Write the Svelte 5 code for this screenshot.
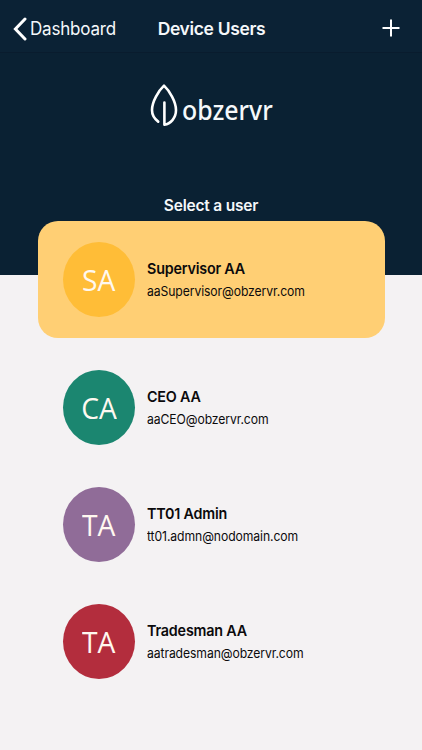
<script>
  const users = [
    { initials: 'SA', name: 'Supervisor AA', email: 'aaSupervisor@obzervr.com', tone: 'amber', selected: true },
    { initials: 'CA', name: 'CEO AA', email: 'aaCEO@obzervr.com', tone: 'green' },
    { initials: 'TA', name: 'TT01 Admin', email: 'tt01.admn@nodomain.com', tone: 'purple' },
    { initials: 'TA', name: 'Tradesman AA', email: 'aatradesman@obzervr.com', tone: 'red' }
  ];
</script>

<main class="screen">
  <header class="bar">
    <button class="back">
      <svg width="14" height="24" viewBox="0 0 14 24"><path d="M12 2 L2.4 12 L12 22" /></svg>
      <span>Dashboard</span>
    </button>
    <h1>Device Users</h1>
    <button class="add" aria-label="Add user">
      <svg width="18" height="18" viewBox="0 0 18 18"><path d="M9 .5V17.5M.5 9H17.5" /></svg>
    </button>
  </header>

  <section class="hero">
    <div class="logo">
      <svg width="28" height="44" viewBox="0 0 28 44">
        <path d="M8.2 38.6C4.2 35.6 2 31.6 2 27C2 18.6 8.6 7.6 14 2.6C19.4 7.6 26 18.6 26 27C26 35 20.5 41 14.4 41.6V19.5" />
      </svg>
      <span>obzervr</span>
    </div>
    <h2>Select a user</h2>
  </section>

  <ul class="users">
    {#each users as user}
      <li class="user" class:selected={user.selected}>
        <div class="avatar {user.tone}"><span>{user.initials}</span></div>
        <div class="details">
          <strong>{user.name}</strong>
          <span>{user.email}</span>
        </div>
      </li>
    {/each}
  </ul>
</main>

<style>
  .screen {
    height: 750px;
    overflow: hidden;
    box-sizing: border-box;
    background: #f4f2f3;
    font-family: Inter, 'Liberation Sans', sans-serif;
    color: #0b0a0c;
  }
  .bar {
    height: 53px;
    box-sizing: border-box;
    padding: 5px 13px 0;
    display: grid;
    grid-template-columns: 1fr auto 1fr;
    align-items: center;
    background: #0b2235;
    border-bottom: 1px solid #091c2e;
    color: #f5f8fa;
  }
  button {
    display: flex;
    align-items: center;
    padding: 0;
    border: 0;
    background: none;
    color: inherit;
    font: inherit;
  }
  svg {
    display: block;
    flex: none;
    fill: none;
    stroke: #fff;
    stroke-linejoin: round;
  }
  .back { gap: 3px; font-size: 18px; letter-spacing: -0.2px; }
  .back span { transform: scaleX(0.945); transform-origin: left; }
  .back svg { stroke-width: 3; stroke-linecap: round; stroke-linejoin: miter; }
  .add { justify-self: end; margin: 0 9px 2px 0; }
  .add svg { stroke-width: 2; }
  h1, h2 { margin: 0; font-weight: 600; }
  h1 { font-size: 17.5px; letter-spacing: -0.35px; padding-left: 1px; }
  .hero {
    height: 222px;
    box-sizing: border-box;
    padding-top: 30px;
    display: flex;
    flex-direction: column;
    align-items: center;
    background: #0a2133;
    color: #f5f8fa;
  }
  .logo { display: flex; width: 122px; height: 44px; gap: 3.5px; }
  .logo svg { stroke-width: 2.6; stroke-linecap: round; }
  .logo span {
    font: 500 27.5px/40px 'Noto Sans', sans-serif;
    padding-top: 7px;
    transform: scaleX(0.905);
    transform-origin: left;
  }
  h2 { margin-top: 69px; font-size: 15.5px; line-height: 20px; letter-spacing: -0.2px; }
  .users {
    position: relative;
    margin: -54px 37px 0 38px;
    padding: 0;
    list-style: none;
  }
  .user {
    height: 117px;
    box-sizing: border-box;
    padding-left: 25px;
    display: flex;
    align-items: center;
    gap: 11.5px;
  }
  .selected {
    margin-bottom: 11px;
    border-radius: 20px;
    background: #ffcf74;
  }
  .avatar {
    width: 72px;
    height: 75px;
    display: flex;
    align-items: center;
    justify-content: center;
    border-radius: 50%;
    color: #fff8f0;
    font: 400 30px/40px 'Open Sans', 'Noto Sans', sans-serif;
  }
  .avatar span { transform: scaleX(0.94); }
  .amber { background: #ffbd37; }
  .green { background: #1b8670; }
  .purple { background: #906c98; }
  .red { background: #b32d3d; }
  .details { display: flex; flex-direction: column; gap: 2.5px; padding-top: 0.5px; }
  .details > * { transform-origin: left; }
  strong { font-size: 15px; line-height: 20px; font-weight: 600; letter-spacing: -0.2px; transform: scaleX(0.955); }
  .details span { font-size: 13px; line-height: 20px; letter-spacing: -0.1px; transform: scaleX(0.937); }
</style>
